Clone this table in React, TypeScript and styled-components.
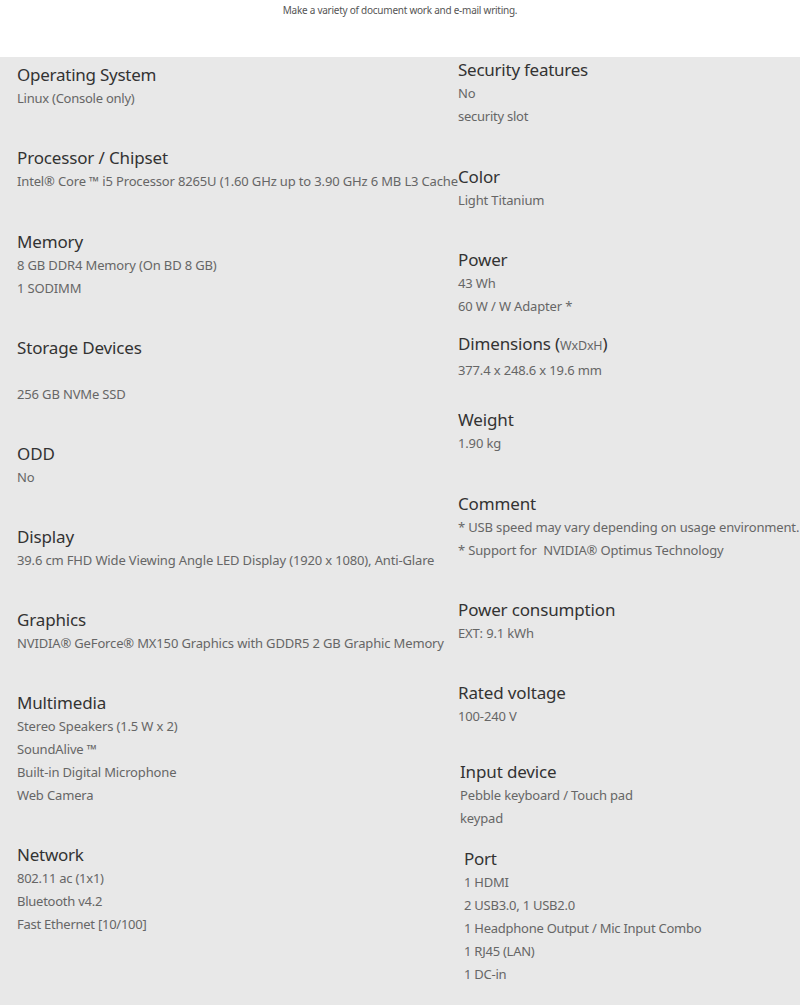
import { styled, createGlobalStyle } from "styled-components";

type Spec = {
  title: string;
  note?: string;
  values: string[];
  gap?: number;
  indent?: number;
  narrow?: boolean;
  headGap?: number;
};

const leftSpecs: Spec[] = [
  { title: "Operating System", values: ["Linux (Console only)"], gap: 0, narrow: true },
  {
    title: "Processor / Chipset",
    values: ["Intel® Core ™ i5 Processor 8265U (1.60 GHz up to 3.90 GHz 6 MB L3 Cache"],
  },
  { title: "Memory", values: ["8 GB DDR4 Memory (On BD 8 GB)", "1 SODIMM"] },
  { title: "Storage Devices", values: ["", "256 GB NVMe SSD"] },
  { title: "ODD", values: ["No"] },
  {
    title: "Display",
    values: ["39.6 cm FHD Wide Viewing Angle LED Display (1920 x 1080), Anti-Glare"],
  },
  {
    title: "Graphics",
    values: ["NVIDIA® GeForce® MX150 Graphics with GDDR5 2 GB Graphic Memory"],
    gap: 35.5,
  },
  {
    title: "Multimedia",
    values: [
      "Stereo Speakers (1.5 W x 2)",
      "SoundAlive ™",
      "Built-in Digital Microphone",
      "Web Camera",
    ],
  },
  {
    title: "Network",
    values: ["802.11 ac (1x1)", "Bluetooth v4.2", "Fast Ethernet [10/100]"],
    narrow: true,
  },
];

const rightSpecs: Spec[] = [
  { title: "Security features", values: ["No", "security slot"], gap: 0, narrow: true },
  { title: "Color", values: ["Light Titanium"], gap: 37 },
  { title: "Power", values: ["43 Wh", "60 W / W Adapter *"], gap: 35.5 },
  { title: "Dimensions", note: "WxDxH", values: ["377.4 x 248.6 x 19.6 mm"], gap: 14, headGap: 1.5 },
  { title: "Weight", values: ["1.90 kg"], gap: 25.5 },
  {
    title: "Comment",
    values: [
      "* USB speed may vary depending on usage environment.",
      "* Support for\u00a0 NVIDIA® Optimus Technology",
    ],
    gap: 37.25,
  },
  { title: "Power consumption", values: ["EXT: 9.1 kWh"] },
  { title: "Rated voltage", values: ["100-240 V"] },
  {
    title: "Input device",
    values: ["Pebble keyboard / Touch pad", "keypad"],
    gap: 31.5,
    indent: 2,
  },
  {
    title: "Port",
    values: [
      "1 HDMI",
      "2 USB3.0, 1 USB2.0",
      "1 Headphone Output / Mic Input Combo",
      "1 RJ45 (LAN)",
      "1 DC-in",
    ],
    gap: 17,
    indent: 6,
    narrow: true,
  },
];

const SpecColumn = ({ specs, top }: { specs: Spec[]; top: number }) => (
  <Column $top={top}>
    {specs.map((s) => (
      <Section key={s.title} $gap={s.gap ?? 36.25} $indent={s.indent ?? 0} $narrow={!!s.narrow}>
        <Heading $after={s.headGap ?? 0}>
          {s.title}
          {s.note && (
            <>
              {" ("}
              <Note>{s.note}</Note>
              {")"}
            </>
          )}
        </Heading>
        {s.values.map((v, i) => (
          <Value key={i}>{v || "\u00a0"}</Value>
        ))}
      </Section>
    ))}
  </Column>
);

export default function App() {
  return (
    <>
      <GlobalStyle />
      <Intro>Make a variety of document work and e-mail writing.</Intro>
      <Specs>
        <SpecColumn specs={leftSpecs} top={6} />
        <SpecColumn specs={rightSpecs} top={1} />
      </Specs>
    </>
  );
}

const GlobalStyle = createGlobalStyle`
  html, body {
    margin: 0;
    padding: 0;
    background: #ffffff;
  }
  body {
    font-family: "Noto Sans", "Open Sans", sans-serif;
  }
`;

const Intro = styled.div`
  height: 57px;
  box-sizing: border-box;
  padding-top: 3px;
  text-align: center;
  font-size: 10px;
  line-height: 14px;
  letter-spacing: -0.25px;
  color: #555;
`;

const Specs = styled.div`
  display: grid;
  grid-template-columns: 441px 1fr;
  padding: 0 0 19px 17px;
  min-height: 948px;
  box-sizing: border-box;
  background: #e8e8e8;
`;

const Column = styled.div<{ $top: number }>`
  display: flex;
  flex-direction: column;
  padding-top: ${(p) => p.$top}px;
  min-width: 0;
`;

const Section = styled.div<{ $gap: number; $indent: number; $narrow: boolean }>`
  margin-top: ${(p) => p.$gap}px;
  padding-left: ${(p) => p.$indent}px;
  white-space: nowrap;
  letter-spacing: ${(p) => (p.$narrow ? "-0.25px" : "-0.15px")};
`;

const Heading = styled.div<{ $after: number }>`
  font-size: 17px;
  line-height: 24px;
  color: #333;
  margin-bottom: ${(p) => p.$after}px;
`;

const Note = styled.span`
  font-size: 12.5px;
  color: #666;
`;

const Value = styled.div`
  font-size: 13px;
  line-height: 23px;
  color: #666;
`;
